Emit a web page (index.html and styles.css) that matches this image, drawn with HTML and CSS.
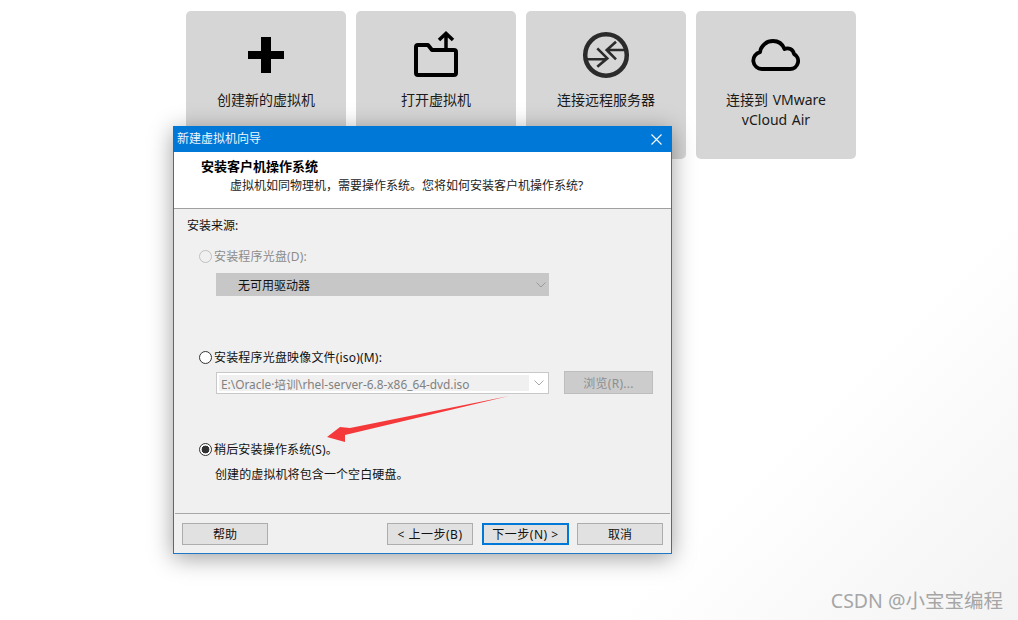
FILE: index.html
```html
<!DOCTYPE html>
<html lang="zh">
<head>
<meta charset="utf-8">
<title>新建虚拟机向导</title>
<link rel="stylesheet" href="styles.css">
</head>
<body>
<main class="home">
  <div class="cards">
    <div class="card">
      <svg class="icon" width="60" height="60" viewBox="0 0 60 60"><path d="M25 12h10v14h13v8H35v14H25V34H12v-8h13z" fill="#000"/></svg>
      <div class="card-label">创建新的虚拟机</div>
    </div>
    <div class="card">
      <svg class="icon" width="60" height="60" viewBox="0 0 60 60"><path d="M12 20h10l4 5h22a2 2 0 0 1 2 2v21a2 2 0 0 1-2 2H12a2 2 0 0 1-2-2V22a2 2 0 0 1 2-2z" fill="none" stroke="#000" stroke-width="4" stroke-linejoin="round"/><path d="M40 25V9M33 15l7-6.500 7 6.500" fill="none" stroke="#000" stroke-width="3.500"/></svg>
      <div class="card-label">打开虚拟机</div>
    </div>
    <div class="card">
      <svg class="icon" width="60" height="60" viewBox="0 0 60 60"><circle cx="30" cy="30" r="20.800" fill="none" stroke="#2b2b2b" stroke-width="4.500"/><path d="M10 34.300h20M21.300 23.300l10 10-10 8.400M50 25H32M40 16.700l-9.300 8.300L40 34.300" fill="none" stroke="#2b2b2b" stroke-width="2.600"/></svg>
      <div class="card-label">连接远程服务器</div>
    </div>
    <div class="card">
      <svg class="icon" width="60" height="60" viewBox="0 0 60 60"><path d="M16 44a8.500 8.500 0 0 1-2-16.800C15 20 21 16 27 16c5 0 9.500 3 11.500 8 4-1.500 8.500 0 9.500 5a8 8 0 0 1-4 15z" fill="none" stroke="#000" stroke-width="3.800" stroke-linejoin="round"/></svg>
      <div class="card-label">连接到 VMware<br>vCloud Air</div>
    </div>
  </div>
</main>

<section class="dialog">
  <header class="titlebar">
    <span>新建虚拟机向导</span>
    <svg class="close" width="11" height="11" viewBox="0 0 11 11"><path d="M.5.5l10 10M10.500.5l-10 10" stroke="#fff" stroke-width="1.100" fill="none"/></svg>
  </header>
  <div class="head">
    <div class="head-title">安装客户机操作系统</div>
    <div class="head-sub">虚拟机如同物理机&#xFF0C;需要操作系统。您将如何安装客户机操作系统?</div>
  </div>
  <div class="content">
    <div class="source">安装来源:</div>
    <label class="option disabled"><span class="radio"></span>安装程序光盘(D):</label>
    <div class="select">
      <span>无可用驱动器</span>
      <svg class="chev" width="10" height="6" viewBox="0 0 10 6"><path d="M.5.500L5 5 9.500.5" fill="none" stroke="#9a9a9a"/></svg>
    </div>
    <label class="option iso"><span class="radio"></span>安装程序光盘映像文件(iso)(M):</label>
    <div class="iso-row">
      <div class="combo">
        <span class="combo-text">E:\Oracle·培训\rhel-server-6.8-x86_64-dvd.iso</span>
        <svg class="chev" width="10" height="6" viewBox="0 0 10 6"><path d="M.5.500L5 5 9.500.5" fill="none" stroke="#a8a8a8"/></svg>
      </div>
      <div class="browse">浏览(R)...</div>
    </div>
    <label class="option later"><span class="radio on"></span>稍后安装操作系统(S)。</label>
    <div class="later-note">创建的虚拟机将包含一个空白硬盘。</div>
  </div>
  <footer class="actions">
    <div class="btn">帮助</div>
    <div class="nav">
      <div class="btn wide">&lt; 上一步(B)</div>
      <div class="btn primary wide">下一步(N) &gt;</div>
      <div class="btn">取消</div>
    </div>
  </footer>
</section>

<svg class="arrow" width="200" height="60" viewBox="0 0 200 60"><path d="M184 1L25 33 15 32 2 42l18 5V40z" fill="#f5393b"/></svg>
<div class="watermark">CSDN @小宝宝编程</div>
</body>
</html>
```
FILE: styles.css
```css
* { box-sizing: border-box; }
html, body { margin: 0; height: 100%; }
body {
  position: relative;
  width: 1018px;
  height: 620px;
  overflow: hidden;
  background: linear-gradient(135deg, #fff 75%, #f3f3f3 100%);
  font-family: "Noto Sans", "Noto Sans CJK SC", sans-serif;
  font-size: 12px;
  color: #111;
}
.home { padding: 11px 0 0 186px; }
.cards { display: flex; gap: 10px; }
.card {
  width: 160px;
  height: 148px;
  padding-top: 14px;
  border-radius: 5px;
  background: #d6d6d6;
  display: flex;
  flex-direction: column;
  align-items: center;
  text-align: center;
}
.icon { display: block; flex: none; }
.card-label { margin-top: 5px; font-size: 14px; line-height: 20px; color: #1a1a1a; word-spacing: 1px; }

.dialog {
  position: absolute;
  left: 173px;
  top: 126px;
  width: 499px;
  height: 428px;
  display: flex;
  flex-direction: column;
  background: #f0f0f0;
  border: 1px solid #1f78c6;
  border-top: 0;
  box-shadow: 0 4px 22px rgba(0,0,0,.38);
}
.titlebar {
  height: 26px;
  margin: 0 -1px;
  padding: 0 10px 0 4px;
  display: flex;
  align-items: center;
  justify-content: space-between;
  background: #0078d7;
  color: #eef6fd;
  line-height: 26px;
}
.head {
  height: 57px;
  padding: 5px 0 0 27px;
  background: #fff;
  border-bottom: 1px solid #a0a0a0;
  line-height: 18px;
}
.head-title { font-weight: 700; font-size: 13px; color: #000; }
.head-sub { margin: 2px 0 0 29px; color: #222; }
.content { flex: 1; padding: 9px 18px 0 13px; }
.source { line-height: 16px; }
.option { display: flex; align-items: center; height: 16px; letter-spacing: .18px; }
.option.disabled { margin: 14px 0 0 12px; color: #8c8c8c; }
.option.iso { margin: 53px 0 0 12px; }
.option.later { margin: 47px 0 0 12px; }
.radio {
  width: 13px;
  height: 13px;
  margin-right: 2px;
  flex: none;
  border-radius: 50%;
  border: 1px solid #333;
  background: #fff;
}
.disabled .radio { border-color: #c0c0c0; background: #f0f0f0; }
.radio.on { background: radial-gradient(circle, #333 3.6px, #fff 4.2px); }
.select {
  display: flex;
  align-items: center;
  justify-content: space-between;
  width: 333px;
  height: 23px;
  margin: 9px 0 0 29px;
  padding: 0 3px 0 22px;
  background: #c7c7c7;
  color: #111;
}
.iso-row { display: flex; gap: 15px; margin: 7px 0 0 29px; align-items: flex-start; }
.combo {
  display: flex;
  align-items: center;
  justify-content: space-between;
  width: 333px;
  height: 22px;
  padding: 2px 4px 2px 2px;
  background: #fff;
  border: 1px solid #c8c8c8;
}
.combo-text {
  width: 310px;
  height: 16px;
  padding-left: 2px;
  line-height: 18px;
  font-size: 11.850px;
  background: #f0f0f0;
  color: #808080;
  white-space: nowrap;
}
.browse {
  width: 89px;
  height: 23px;
  margin-top: -1px;
  background: #cccccc;
  border: 1px solid #bdbdbd;
  color: #8e8e8e;
  text-align: center;
  line-height: 23px;
  letter-spacing: .3px;
}
.later-note { margin: 10px 0 0 28px; line-height: 16px; letter-spacing: .1px; }
.actions {
  height: 40px;
  margin: 0 1px;
  padding: 9px 7px 0 7px;
  display: flex;
  justify-content: space-between;
  border-top: 1px solid #a8a8a8;
}
.nav { display: flex; gap: 8px; }
.btn {
  width: 86px;
  height: 22px;
  background: #e1e1e1;
  border: 1px solid #adadad;
  color: #111;
  text-align: center;
  line-height: 22px;
}
.wide { letter-spacing: .5px; }
.primary { width: 87px; margin-left: 1px; border: 2px solid #0078d7; line-height: 20px; }
.arrow { position: absolute; left: 325px; top: 395px; }
.watermark {
  position: absolute;
  right: 15px;
  top: 587px;
  font-size: 19.500px;
  line-height: 28px;
  color: #a6a6a6;
  white-space: nowrap;
}
```
